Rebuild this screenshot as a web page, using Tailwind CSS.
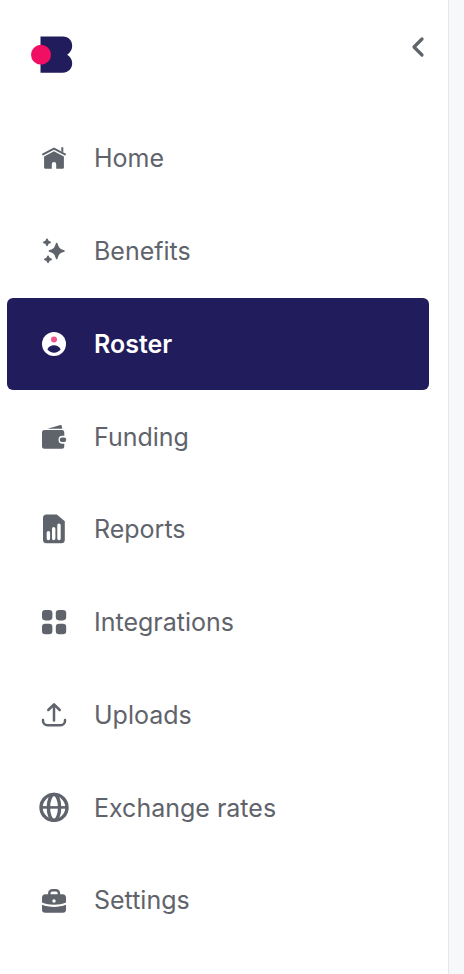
<!DOCTYPE html>
<html lang="en">
<head>
    <meta charset="UTF-8">
    <meta name="viewport" content="width=device-width, initial-scale=1.0">
    <title>Roster</title>
    <script src="https://cdn.jsdelivr.net/npm/@tailwindcss/browser@4"></script>
</head>
<body class="flex min-h-screen bg-[#f7f8fa] font-['Inter',sans-serif]">

    <aside class="flex flex-1 flex-col border-r border-[#e2e6ee] bg-white text-[#5f636b]">
        <header class="flex h-28 items-start justify-between pt-[35px] pr-[17px] pl-[30px]">
            <a href="#" aria-label="Dashboard">
                <svg class="h-10 w-11" viewBox="0 0 44 40">
                    <path fill="#211c5b" d="M10.5 1.5H33c5.5 0 9.2 4 9.2 9.3 0 4.3-2.2 7-5 8.9 2.8 1.6 5 4.6 5 8.6 0 5.4-3.9 9.4-9.5 9.4H10.5z"/>
                    <circle cx="11" cy="19.7" r="10" fill="#f00f62"/>
                </svg>
            </a>
            <button type="button" aria-label="Collapse menu" class="cursor-pointer">
                <svg class="size-6" viewBox="0 0 24 24" fill="none" stroke="currentColor" stroke-width="3.2" stroke-linecap="round" stroke-linejoin="round">
                    <path d="M15 4 7 12l8 8"/>
                </svg>
            </button>
        </header>

        <nav class="flex flex-1 flex-col justify-between pr-[19px] pb-7 pl-[7px] text-[25px]">
            <a href="#" class="flex h-[92px] items-center gap-6 rounded-md pl-[31px]">
                <svg class="size-8" viewBox="0 0 32 32" fill="currentColor">
                    <path d="M5 12.4 16 6.6l11 5.8" fill="none" stroke="currentColor" stroke-width="2" stroke-linecap="round" stroke-linejoin="round"/>
                    <path d="M23.3 5.3h2v5l-2-1z"/>
                    <path d="M16 9.3l9.9 5.2v11a1.3 1.3 0 0 1-1.3 1.3h-6.4v-4.6a2.2 2.2 0 0 0-4.4 0v4.6H7.4a1.3 1.3 0 0 1-1.3-1.3v-11z"/>
                </svg>
                <span class="pt-0.5">Home</span>
            </a>
            <a href="#" class="flex h-[92px] items-center gap-6 rounded-md pl-[31px]">
                <svg class="size-8" viewBox="0 0 32 32" fill="currentColor" stroke="currentColor" stroke-linejoin="round">
                    <path stroke-width="1.6" d="M18.7 8.5c1.4 4.8 2.4 6 7.3 7.5-4.9 1.5-5.9 2.7-7.3 7.5-1.4-4.8-2.4-6-7.3-7.5 4.9-1.5 5.9-2.7 7.3-7.5z"/>
                    <path stroke-width="1.8" d="m9 4.400.9 2 2.1.9-2.1.9-.9 2-.9-2-2.1-.9 2.1-.9zM10 21.400l.9 2 2.1.9-2.1.9-.9 2-.9-2-2.1-.9 2.1-.9z"/>
                </svg>
                <span class="pt-0.5">Benefits</span>
            </a>
            <a href="#" aria-current="page" class="flex h-[92px] items-center gap-6 rounded-md bg-[#211c5b] pl-[31px] font-semibold text-white">
                <svg class="size-8" viewBox="0 0 32 32">
                    <circle cx="16" cy="16" r="12" fill="#fff"/>
                    <circle cx="16" cy="11.4" r="3" fill="#f2528f"/>
                    <path fill="#211c5b" d="M9.3 21.2c1.5-2.6 3.9-4 6.7-4s5.2 1.4 6.7 4c-1.7 2.3-4 3.5-6.7 3.5s-5-1.2-6.7-3.5z"/>
                </svg>
                <span class="pt-0.5">Roster</span>
            </a>
            <a href="#" class="flex h-[92px] items-center gap-6 rounded-md pl-[31px]">
                <svg class="size-8" viewBox="0 0 32 32" fill="currentColor">
                    <path d="m9.3 8.8 13.2-3.7a.9.9 0 0 1 1.2.8l.5 2.9z"/>
                    <path d="M6.5 10h17.3a2.5 2.5 0 0 1 2.5 2.5v3.2h-1.8a4 4 0 0 0 0 8h1.8v2.5a2.5 2.5 0 0 1-2.5 2.5H6.5A2.5 2.5 0 0 1 4 26.2V12.5A2.5 2.5 0 0 1 6.5 10z"/>
                    <rect x="21.8" y="17.5" width="6.4" height="4.4" rx="2"/>
                </svg>
                <span class="pt-0.5">Funding</span>
            </a>
            <a href="#" class="flex h-[92px] items-center gap-6 rounded-md pl-[31px]">
                <svg class="size-8" viewBox="0 0 32 32" fill="currentColor">
                    <path d="M8.5 1.4h10.3l8 6.8v18.6a3.5 3.5 0 0 1-3.5 3.5H8.5A3.5 3.5 0 0 1 5 26.8V4.9a3.5 3.5 0 0 1 3.5-3.5z"/>
                    <path d="M10.4 19.7v5.9M15.7 15.7v9.9M21 12.3v13.3" stroke="#fff" stroke-width="3.4" stroke-linecap="round"/>
                </svg>
                <span class="pt-0.5">Reports</span>
            </a>
            <a href="#" class="flex h-[92px] items-center gap-6 rounded-md pl-[31px]">
                <svg class="size-8" viewBox="0 0 32 32" fill="currentColor">
                    <rect x="4" y="4" width="10.4" height="10.4" rx="3.3"/>
                    <rect x="17.8" y="4" width="10.4" height="10.4" rx="3.3"/>
                    <rect x="4" y="17.8" width="10.4" height="10.4" rx="3.3"/>
                    <rect x="17.8" y="17.8" width="10.4" height="10.4" rx="3.3"/>
                </svg>
                <span class="pt-0.5">Integrations</span>
            </a>
            <a href="#" class="flex h-[92px] items-center gap-6 rounded-md pl-[31px]">
                <svg class="size-8" viewBox="0 0 32 32" fill="none" stroke="currentColor" stroke-width="2.5" stroke-linecap="round" stroke-linejoin="round">
                    <path d="M16 21.5v-16M10.3 11 16 5.3l5.7 5.7"/>
                    <path d="M5 21v.8a4.5 4.5 0 0 0 4.5 4.5h13a4.5 4.5 0 0 0 4.5-4.5V21"/>
                </svg>
                <span class="pt-0.5">Uploads</span>
            </a>
            <a href="#" class="flex h-[92px] items-center gap-6 rounded-md pl-[31px]">
                <svg class="size-8" viewBox="0 0 32 32" fill="none" stroke="currentColor" stroke-width="3.4">
                    <circle cx="16" cy="16.4" r="13"/>
                    <ellipse cx="16" cy="16.4" rx="5.6" ry="13"/>
                    <path stroke-width="2.6" d="M3 16.4h26"/>
                </svg>
                <span class="pt-0.5">Exchange rates</span>
            </a>
            <a href="#" class="flex h-[92px] items-center gap-6 rounded-md pl-[31px]">
                <svg class="size-8" viewBox="0 0 32 32" fill="currentColor">
                    <path d="M11.3 11V9.3a3 3 0 0 1 3-3h3.6a3 3 0 0 1 3 3V11" fill="none" stroke="currentColor" stroke-width="2.4"/>
                    <path fill-rule="evenodd" d="M7.5 10.3h17a3.5 3.5 0 0 1 3.5 3.5v4.8c-3.6 1.4-7.6 2.2-12 2.2s-8.4-.8-12-2.2v-4.8a3.5 3.5 0 0 1 3.5-3.5zM16 15.3a1.7 1.7 0 1 0 0 3.4 1.7 1.7 0 0 0 0-3.4z"/>
                    <path d="M4 20.700c3.6 1.4 7.6 2.2 12 2.2s8.4-.8 12-2.2v4.8a3.2 3.2 0 0 1-3.2 3.2H7.2A3.2 3.2 0 0 1 4 25.5z"/>
                </svg>
                <span class="pt-0.5">Settings</span>
            </a>
        </nav>
    </aside>

    <main class="w-[15px]"></main>

</body>
</html>
